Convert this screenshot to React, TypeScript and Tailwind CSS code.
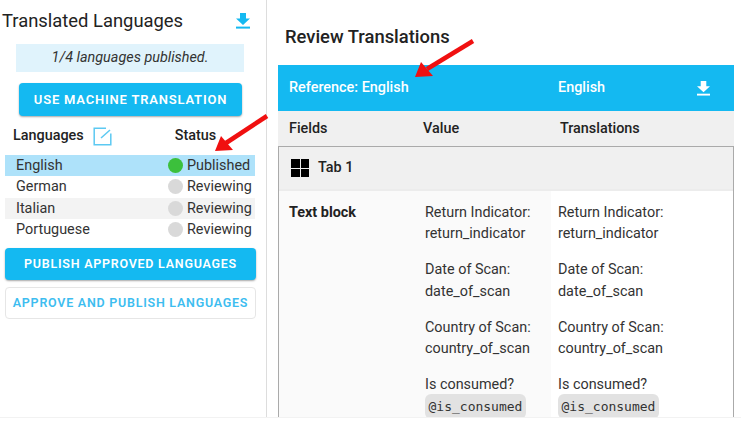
const langs = [
  { name: "English", status: "Published", row: "bg-[#aee2fa]", dot: "bg-[#3cc03c]" },
  { name: "German", status: "Reviewing", row: "bg-white", dot: "bg-[#d9d9d9]" },
  { name: "Italian", status: "Reviewing", row: "bg-[#f3f3f3]", dot: "bg-[#d9d9d9]" },
  { name: "Portuguese", status: "Reviewing", row: "bg-white", dot: "bg-[#d9d9d9]" },
]

const fields = [
  { label: "Return Indicator:", value: "return_indicator" },
  { label: "Date of Scan:", value: "date_of_scan" },
  { label: "Country of Scan:", value: "country_of_scan" },
]

function DownloadIcon({ className }: { className: string }) {
  return (
    <svg viewBox="0 0 14 16" className={className} fill="currentColor">
      <path d="M4 0h6v5.5h4L7 12 0 5.5h4z" />
      <rect x="0" y="13.6" width="14" height="2" />
    </svg>
  )
}

function FieldList() {
  return (
    <div className="flex flex-col gap-[14.67px] text-[14.4px] leading-[21.33px] text-[#333]">
      {fields.map((f) => (
        <div key={f.label}>
          <p>{f.label}</p>
          <p>{f.value}</p>
        </div>
      ))}
      <div>
        <p>Is consumed?</p>
        <code className="-mt-[1px] inline-block rounded-md bg-[#e2e2e2] px-[3.5px] font-['DejaVu_Sans_Mono',monospace] text-[13px] leading-[25px]">
          @is_consumed
        </code>
      </div>
    </div>
  )
}

export default function App() {
  return (
    <div className="relative h-[425px] w-[741px] overflow-hidden bg-white font-['Roboto',sans-serif] text-[#222]">
      <div className="flex h-[418px] overflow-hidden border-b border-[#f2f2f2]">

        {/* Left panel */}
        <div className="w-[267px] shrink-0 border-r border-[#ddd] pl-[5px] pr-[10px]">
          <div className="-ml-[3px] flex h-[41px] items-center justify-between pr-[6px]">
            <h2 className="text-[18.4px] font-normal">Translated Languages</h2>
            <DownloadIcon className="h-[16px] w-[14px] text-[#14b9f1]" />
          </div>
          <div className="ml-[11px] mt-[3px] flex h-[28px] w-[228px] items-center justify-center bg-[#e0f3fc] text-[14.4px] italic text-[#333]">
            1/4 languages published.
          </div>
          <button className="ml-[14px] mt-[11px] h-[33px] w-[223px] rounded bg-[#14b9f1] text-[13px] font-semibold tracking-[0.8px] text-white shadow-[0_1px_2px_rgba(0,0,0,0.35)]">
            USE MACHINE TRANSLATION
          </button>
          <div className="mt-[6px] flex h-[28px] items-center text-[14.4px] font-medium">
            <span className="ml-[8px]">Languages</span>
            <svg viewBox="0 0 19 19" className="ml-[9px] h-[19px] w-[19px] text-[#5cc9f2]" fill="none" stroke="currentColor" strokeWidth="1.5">
              <path d="M13 1.2H1.2v16.6h16.6V6.5" />
              <path d="M8 11l9-8" />
            </svg>
            <span className="ml-[63px]">Status</span>
          </div>
          <div className="mt-[5px] w-[250px]">
            {langs.map((l) => (
              <div key={l.name} className={`flex h-[21.33px] items-center text-[14.4px] text-[#333] ${l.row}`}>
                <span className="ml-[11px] flex-1">{l.name}</span>
                <span className={`mr-[4px] h-[15px] w-[15px] rounded-full ${l.dot}`} />
                <span className="w-[68px]">{l.status}</span>
              </div>
            ))}
          </div>
          <button className="mt-[8px] h-[32px] w-[251px] rounded bg-[#14b9f1] text-[12.5px] font-semibold tracking-[0.75px] text-white shadow-[0_1px_2px_rgba(0,0,0,0.35)]">
            PUBLISH APPROVED LANGUAGES
          </button>
          <button className="mt-[7px] h-[32px] w-[251px] whitespace-nowrap rounded border border-[#e6e6e6] bg-white text-[12.5px] font-semibold tracking-[0.75px] text-[#3dbdf0]">
            APPROVE AND PUBLISH LANGUAGES
          </button>
        </div>

        {/* Right panel */}
        <div className="ml-[11px] w-[456px] shrink-0">
          <h2 className="ml-[7px] flex h-[65px] items-center pt-[8px] text-[18.4px] font-medium text-[#222]">Review Translations</h2>
          <div className="flex h-[46px] items-center bg-[#14b9f1] text-[14.4px] font-medium text-white">
            <span className="w-[280px] pl-[11px]">Reference: English</span>
            <span className="flex-1">English</span>
            <DownloadIcon className="mr-[24px] h-[15px] w-[13px] text-white" />
          </div>
          <div className="flex h-[35px] items-center bg-[#f0f0f0] text-[14.4px] font-medium">
            <span className="w-[145px] pl-[11px]">Fields</span>
            <span className="w-[137px]">Value</span>
            <span>Translations</span>
          </div>
          <div className="h-[272px] border-x border-t border-[#aaa]">
            <div className="flex h-[44px] items-center gap-[9px] border-b-2 border-[#ececec] bg-[#f0f0f0] pl-[12px] text-[14.4px] font-medium">
              <div className="grid h-[18px] w-[18px] grid-cols-2 gap-[1px]">
                <span className="bg-black" />
                <span className="bg-black" />
                <span className="bg-black" />
                <span className="bg-black" />
              </div>
              Tab 1
            </div>
            <div className="flex h-[230px]">
              <div className="flex w-[272px] bg-[#fafafa] pt-[11px]">
                <span className="w-[146px] pl-[10px] text-[14.4px] font-bold leading-[21.33px]">Text block</span>
                <FieldList />
              </div>
              <div className="pl-[7px] pt-[11px]">
                <FieldList />
              </div>
            </div>
          </div>
        </div>
      </div>

      {/* Annotation arrows */}
      <svg viewBox="0 0 741 425" className="pointer-events-none absolute inset-0 h-[425px] w-[741px]">
        <path d="M267 116 L226 143" stroke="#f01010" strokeWidth="4.5" />
        <path d="M215 151 L221 136 L233 150z" fill="#f01010" />
        <path d="M473 41 L427 69" stroke="#f01010" strokeWidth="4.5" />
        <path d="M415 77 L421 62 L433 76z" fill="#f01010" />
      </svg>
    </div>
  )
}
